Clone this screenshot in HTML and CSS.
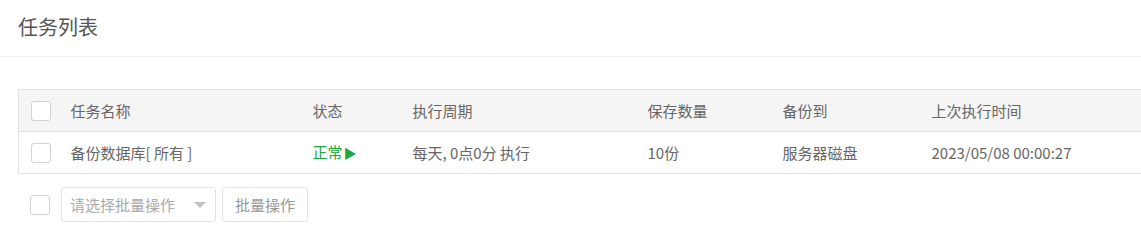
FILE: index.html
```html
<!DOCTYPE html>
<html lang="zh-CN">
<head>
<meta charset="utf-8">
<title>任务列表</title>
<link rel="stylesheet" href="styles.css">
</head>
<body>
<div class="page">
  <div class="page-head"><h1 class="page-title">任务列表</h1></div>
  <div class="page-body">
    <table class="task-table">
      <colgroup>
        <col class="c-check"><col class="c-name"><col class="c-status"><col class="c-cycle"><col class="c-count"><col class="c-dest"><col class="c-time">
      </colgroup>
      <thead>
        <tr>
          <th><span class="checkbox"></span></th>
          <th>任务名称</th>
          <th>状态</th>
          <th>执行周期</th>
          <th>保存数量</th>
          <th>备份到</th>
          <th>上次执行时间</th>
        </tr>
      </thead>
      <tbody>
        <tr>
          <td><span class="checkbox"></span></td>
          <td>备份数据库[ 所有 ]</td>
          <td><span class="status-ok">正常<span class="play">&#9654;</span></span></td>
          <td>每天, 0点0分 执行</td>
          <td>10份</td>
          <td>服务器磁盘</td>
          <td>2023/05/08 00:00:27</td>
        </tr>
      </tbody>
    </table>
    <div class="batch">
      <span class="checkbox"></span>
      <div class="select">
        <span class="select-text">请选择批量操作</span>
        <span class="caret"></span>
      </div>
      <button class="btn" type="button">批量操作</button>
    </div>
  </div>
</div>
</body>
</html>
```
FILE: styles.css
```css
html, body {
  margin: 0;
  padding: 0;
  background: #fff;
  overflow: hidden;
}
body {
  font-family: "Noto Sans CJK SC", "Liberation Sans", sans-serif;
  font-size: 15px;
  color: #666;
}
.page-head {
  height: 56px;
  border-bottom: 1px solid #eeeeee;
  display: flex;
  align-items: center;
  padding-left: 18px;
}
.page-title {
  margin: 0;
  font-size: 20px;
  font-weight: normal;
  color: #555;
  line-height: 1;
  position: relative;
  top: -1px;
}
.page-body {
  padding: 32px 0 0 18px;
}
.task-table {
  border-collapse: collapse;
  table-layout: fixed;
  width: 1124px;
  border: 1px solid #e2e2e2;
}
.c-check { width: 40px; }
.c-name { width: 242px; }
.c-status { width: 100px; }
.c-cycle { width: 235px; }
.c-count { width: 135px; }
.c-dest { width: 149px; }
.task-table th,
.task-table td {
  height: 41px;
  padding: 0 12px;
  text-align: left;
  font-weight: normal;
  vertical-align: middle;
  white-space: nowrap;
  line-height: 20px;
}
.task-table thead tr {
  background: #f5f5f5;
}
.task-table thead th {
  border-bottom: 1px solid #e2e2e2;
}
.checkbox {
  display: block;
  width: 18px;
  height: 18px;
  border: 1px solid #d2d2d2;
  border-radius: 3px;
  background: #fff;
}
.status-ok {
  color: #20a53a;
}
.play {
  font-size: 13px;
  margin-left: 1px;
}
.batch {
  display: flex;
  align-items: center;
  gap: 6px;
  margin-top: 13px;
  padding-left: 12px;
}
.batch .checkbox {
  margin-right: 5px;
}
.select {
  width: 136px;
  height: 33px;
  border: 1px solid #e2e2e2;
  border-radius: 3px;
  display: flex;
  align-items: center;
  justify-content: space-between;
  padding: 0 9px 0 8px;
  color: #aaa;
}
.caret {
  width: 0;
  height: 0;
  border-left: 6px solid transparent;
  border-right: 6px solid transparent;
  border-top: 6px solid #c2c2c2;
}
.btn {
  height: 35px;
  padding: 0 12px;
  border: 1px solid #e2e2e2;
  border-radius: 3px;
  background: #fff;
  color: #999;
  font-family: inherit;
  font-size: 15px;
}
```
